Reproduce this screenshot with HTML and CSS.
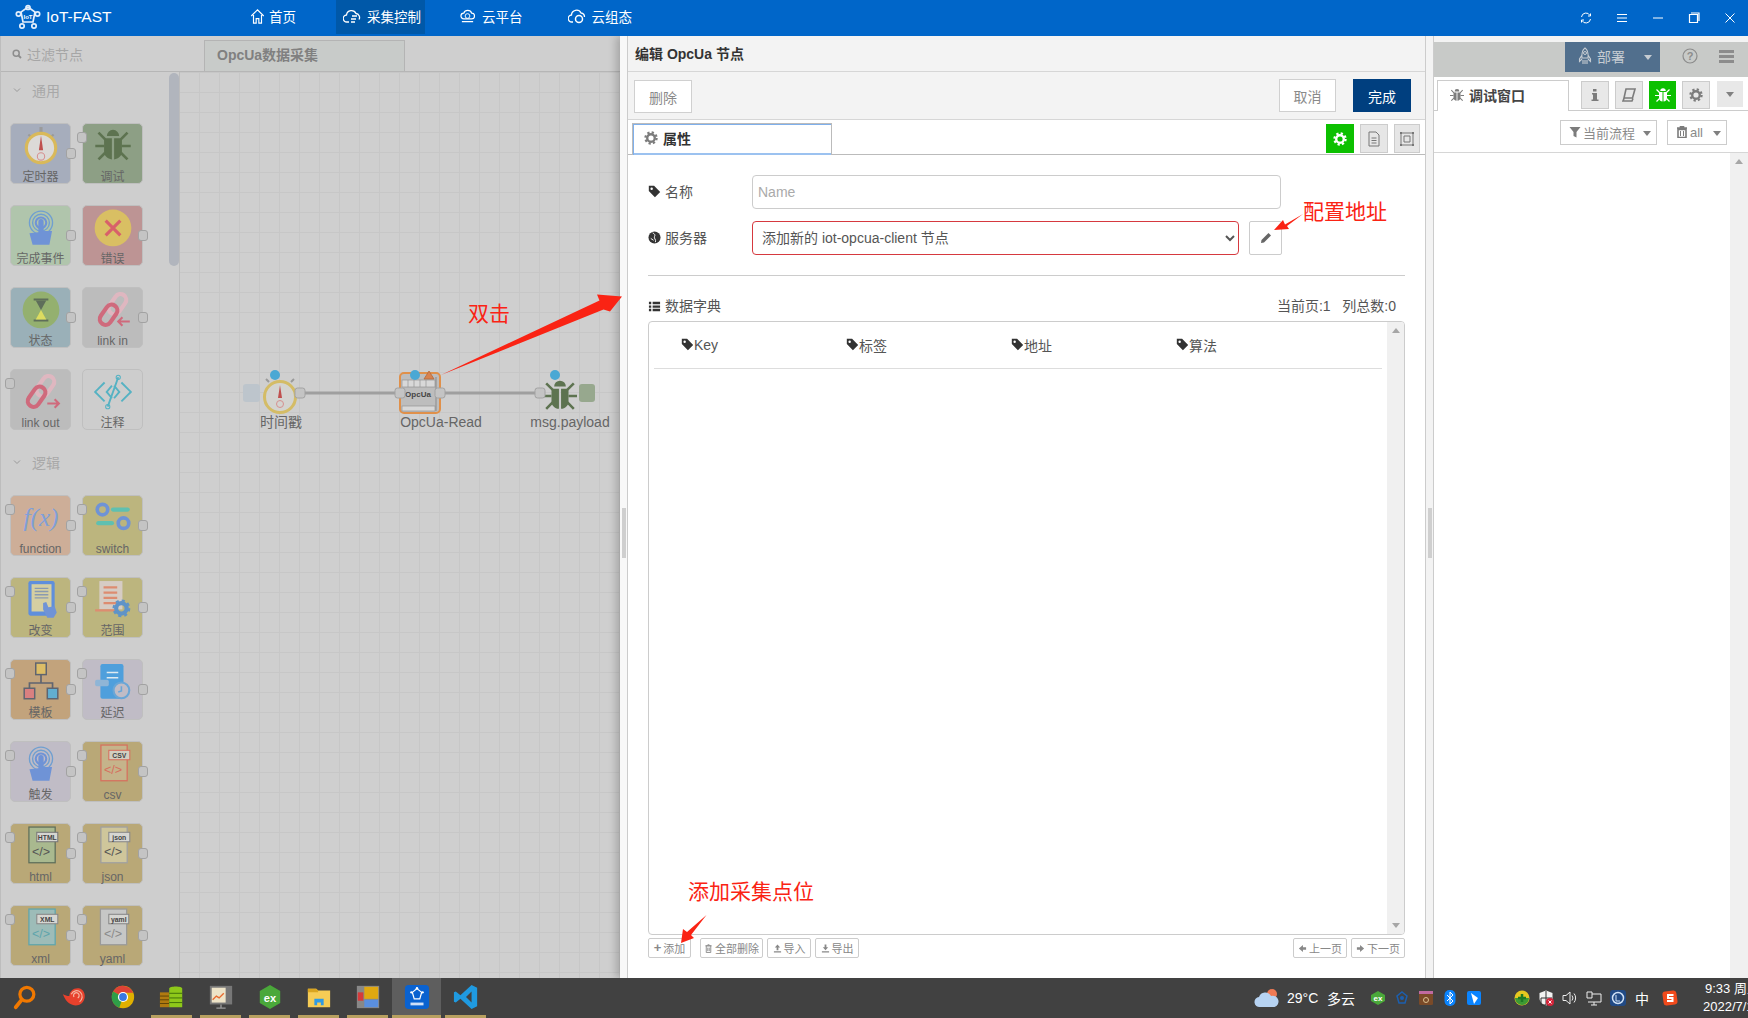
FILE: index.html
```html
<!DOCTYPE html>
<html lang="zh-CN">
<head>
<meta charset="utf-8">
<title>IoT-FAST</title>
<link rel="stylesheet" href="styles.css">
</head>
<body>
<svg class="sprite" aria-hidden="true">
  <symbol id="bug" viewBox="0 0 32 32">
    <path d="M10.5 8a5.5 5.5 0 0 1 11 0z" fill="currentColor"/>
    <path d="M8 10h7v19c-4-.5-7-3-7-7zM17 10h7v12c0 4-3 6.500-7 7z" fill="currentColor"/>
    <path d="M9 11 3 5M23 11l6-6M8 17H0M24 17h8M9 23l-6 6M23 23l6 6" stroke="currentColor" stroke-width="2.400" fill="none"/>
  </symbol>
  <symbol id="tag" viewBox="0 0 16 16">
    <path fill-rule="evenodd" fill="currentColor" d="M1 1h6.500L15 8.500 8.500 15 1 7.500zM4.500 3A1.500 1.500 0 1 0 4.500 6 1.500 1.500 0 0 0 4.500 3z"/>
  </symbol>
  <symbol id="gear" viewBox="0 0 20 20">
    <circle cx="10" cy="10" r="5.400" fill="none" stroke="currentColor" stroke-width="3.400"/>
    <circle cx="10" cy="10" r="8" fill="none" stroke="currentColor" stroke-width="3.200" stroke-dasharray="3.200 3.080"/>
  </symbol>
  <symbol id="touch" viewBox="0 0 40 40">
    <g fill="none" stroke="#6f9fd0" stroke-width="1.300"><circle cx="20" cy="14" r="11"/><circle cx="20" cy="14" r="8"/></g>
    <circle cx="20" cy="14" r="5" fill="none" stroke="#6f93d6" stroke-width="2"/>
    <path d="M17.500 13a2.500 2.500 0 0 1 5 0v9h8l-2.500 13h-16L9 24l8.500-1z" fill="#6f93d6"/>
  </symbol>
</svg>

<header class="app-header">
  <div class="brand">
    <svg class="brand-logo" viewBox="0 0 26 26"><g fill="none" stroke="#e4eefb" stroke-width="1.700"><path d="M13 3 20 8 18 18H8L6 8z"/><circle cx="13" cy="3.500" r="2"/><circle cx="3.500" cy="10" r="2.200"/><circle cx="22.500" cy="10" r="2.200"/><circle cx="7" cy="22" r="2.200"/><circle cx="19" cy="22" r="2.200"/></g><text x="13" y="14.500" class="brand-iot">IoT</text></svg>
    <span class="brand-name">IoT-FAST</span>
  </div>
  <nav class="main-nav">
    <a class="nav-item"><svg class="nav-ic-s" viewBox="0 0 16 18"><path d="M1 9 8 2l7 7M3.500 8v9h3v-5h3v5h3V8" fill="none" stroke="#fff" stroke-width="1.300"/></svg>首页</a>
    <a class="nav-item active"><svg class="nav-ic" viewBox="0 0 18 16"><path d="M6 14H4a3.500 3.500 0 0 1-.5-7A5 5 0 0 1 13 5.500a4 4 0 0 1 3 6M9 8h5M8 11h5M8 14h4" fill="none" stroke="#fff" stroke-width="1.300"/></svg>采集控制</a>
    <a class="nav-item"><svg class="nav-ic-s" viewBox="0 0 16 16"><path d="M4 11a3 3 0 0 1 0-6 4.500 4.500 0 0 1 8.500 0 3 3 0 0 1 0 6zM2 14h12" fill="none" stroke="#fff" stroke-width="1.300"/><circle cx="8" cy="8" r="2.500" fill="none" stroke="#fff"/></svg>云平台</a>
    <a class="nav-item"><svg class="nav-ic" viewBox="0 0 18 16"><path d="M5 14H4a3.500 3.500 0 0 1-.5-7A5 5 0 0 1 13 5a4 4 0 0 1 3.500 4" fill="none" stroke="#fff" stroke-width="1.300"/><circle cx="11" cy="11" r="3.500" fill="none" stroke="#fff" stroke-width="1.500"/></svg>云组态</a>
  </nav>
  <div class="win-controls">
    <span class="win-btn"><svg class="win-ic" viewBox="0 0 12 12"><path d="M1.500 5A4.500 4.500 0 0 1 10 3.500M10.500 7A4.500 4.500 0 0 1 2 8.500M8 4h2.500V1.500M4 8H1.500v2.500" fill="none" stroke="#fff"/></svg></span>
    <span class="win-btn"><svg class="win-ic" viewBox="0 0 12 12"><path d="M1 2.500h10M1 6h10M1 9.500h10" stroke="#fff"/></svg></span>
    <span class="win-btn"><svg class="win-ic" viewBox="0 0 12 12"><path d="M1 6h10" stroke="#fff"/></svg></span>
    <span class="win-btn"><svg class="win-ic" viewBox="0 0 12 12"><path d="M1.500 2.500h8v8h-8zM3 1h8v8" fill="none" stroke="#fff" stroke-width="1.200"/></svg></span>
    <span class="win-btn"><svg class="win-ic" viewBox="0 0 12 12"><path d="M1.500 1.500l9 9M10.500 1.500l-9 9" stroke="#fff"/></svg></span>
  </div>
</header>

<main class="app-main">
  <section class="editor">
    <div class="ws-top">
      <div class="filter-box">
        <svg class="filter-ic" viewBox="0 0 10 10"><circle cx="4.200" cy="4.200" r="3" fill="none" stroke="#8d8d8d" stroke-width="1.500"/><path d="M6.500 6.500 9 9" stroke="#8d8d8d" stroke-width="1.800"/></svg>
        过滤节点
      </div>
      <div class="ws-tab">OpcUa数据采集</div>
    </div>
    <div class="ws-body">
      <aside class="palette">
        <div class="palette-scroll"></div>

        <div class="cat-head"><svg class="cat-ic" viewBox="0 0 8 6"><path d="M1 1.500l3 3 3-3" fill="none" stroke="#9a9a9a"/></svg>通用</div>
        <div class="cat-nodes">
          <div class="pn c-blue"><i class="port out"></i>
            <svg class="pn-ic" viewBox="0 0 40 40"><rect x="18.500" y="1" width="3" height="5" fill="#9a9a9a"/><path d="M8 8l3 3M32 8l-3 3" stroke="#9a9a9a" stroke-width="2"/><circle cx="20" cy="21" r="14" fill="#dcdad7" stroke="#d9b95a" stroke-width="3"/><polygon points="20,9 22,23 18,23" fill="#c0504d"/><circle cx="20" cy="29" r="3.500" fill="none" stroke="#d69090"/></svg>
            <span>定时器</span></div>
          <div class="pn c-green"><i class="port in"></i>
            <svg class="pn-ic bug-ic" viewBox="0 0 40 40"><use href="#bug" x="3" y="1" width="34" height="34"/></svg>
            <span>调试</span></div>
          <div class="pn c-lgreen"><i class="port out"></i>
            <svg class="pn-ic" viewBox="0 0 40 40"><use href="#touch" width="40" height="40"/></svg>
            <span>完成事件</span></div>
          <div class="pn c-red"><i class="port out"></i>
            <svg class="pn-ic" viewBox="0 0 40 40"><circle cx="20" cy="19" r="17.500" fill="#d9bf63"/><path d="M13 12l14 14M27 12 13 26" stroke="#d8606a" stroke-width="3"/></svg>
            <span>错误</span></div>
          <div class="pn c-teal"><i class="port out"></i>
            <svg class="pn-ic" viewBox="0 0 40 40"><circle cx="20" cy="19" r="17.500" fill="#94b06f"/><path d="M13 9h14M13 29h14" stroke="#5f6e5a" stroke-width="2"/><polygon points="15,10 25,10 20,19" fill="#5f6e5a"/><polygon points="20,19 25,28 15,28" fill="#dcdc60"/></svg>
            <span>状态</span></div>
          <div class="pn c-gray"><i class="port out"></i>
            <svg class="pn-ic" viewBox="0 0 40 40"><rect x="19" y="3" width="11" height="21" rx="5.500" transform="rotate(35 24.500 13)" fill="none" stroke="#dfb7c0" stroke-width="4"/><rect x="10" y="13" width="11" height="21" rx="5.500" transform="rotate(35 15.500 24)" fill="none" stroke="#cf6a7c" stroke-width="4"/><path d="M36 30H25M29 26l-4 4 4 4" fill="none" stroke="#cf6a7c" stroke-width="2"/></svg>
            <span>link in</span></div>
          <div class="pn c-gray"><i class="port in"></i>
            <svg class="pn-ic" viewBox="0 0 40 40"><rect x="19" y="3" width="11" height="21" rx="5.500" transform="rotate(35 24.500 13)" fill="none" stroke="#dfb7c0" stroke-width="4"/><rect x="10" y="13" width="11" height="21" rx="5.500" transform="rotate(35 15.500 24)" fill="none" stroke="#cf6a7c" stroke-width="4"/><path d="M26 30h11M33 26l4 4-4 4" fill="none" stroke="#cf6a7c" stroke-width="2"/></svg>
            <span>link out</span></div>
          <div class="pn c-pale">
            <svg class="pn-ic" viewBox="0 0 40 40"><path d="M12 10 3 19l9 9M28 10l9 9-9 9M25 5 15 33M19 13l-5 6 5 6M21 13l5 6-5 6" fill="none" stroke="#55b2c3" stroke-width="1.800"/><circle cx="25" cy="5" r="2" fill="none" stroke="#55b2c3"/><circle cx="15" cy="33" r="2" fill="none" stroke="#55b2c3"/></svg>
            <span>注释</span></div>
        </div>

        <div class="cat-head"><svg class="cat-ic" viewBox="0 0 8 6"><path d="M1 1.500l3 3 3-3" fill="none" stroke="#9a9a9a"/></svg>逻辑</div>
        <div class="cat-nodes">
          <div class="pn c-peach"><i class="port in"></i><i class="port out"></i>
            <svg class="pn-ic" viewBox="0 0 40 40"><text x="20" y="27" class="fx-text">f(x)</text></svg>
            <span>function</span></div>
          <div class="pn c-olive"><i class="port in"></i><i class="port out"></i>
            <svg class="pn-ic" viewBox="0 0 40 40"><circle cx="10" cy="11" r="5" fill="none" stroke="#6f93d6" stroke-width="3.500"/><rect x="18" y="9" width="18" height="4" rx="2" fill="#5fc0b0"/><rect x="4" y="22" width="17" height="4" rx="2" fill="#5fc0b0"/><circle cx="30" cy="24" r="5" fill="none" stroke="#6f93d6" stroke-width="3.500"/></svg>
            <span>switch</span></div>
          <div class="pn c-olive"><i class="port in"></i><i class="port out"></i>
            <svg class="pn-ic" viewBox="0 0 40 40"><rect x="8" y="1" width="25" height="33" rx="2" fill="#5f8fdc"/><rect x="11" y="4" width="19" height="26" fill="#d5cfa2"/><path d="M14 8h13M14 11h13M14 14h13M14 17h13" stroke="#8a9ab0" stroke-width="1.300"/><path d="M22 22l3-1 2 5 6-1 2 6-3 5h-6l-4-8z" fill="#6f93d6"/></svg>
            <span>改变</span></div>
          <div class="pn c-olive"><i class="port in"></i><i class="port out"></i>
            <svg class="pn-ic" viewBox="0 0 40 40"><rect x="7" y="1" width="22" height="27" fill="#d6ccc4"/><path d="M11 7h13M11 12h13M11 17h13M11 22h13M3 29h20" stroke="#dd8c70" stroke-width="2.200"/><circle cx="28" cy="27" r="5" fill="none" stroke="#5f93c8" stroke-width="4"/><circle cx="28" cy="27" r="7.500" fill="none" stroke="#5f93c8" stroke-width="2" stroke-dasharray="3 2.900"/></svg>
            <span>范围</span></div>
          <div class="pn c-orange"><i class="port in"></i><i class="port out"></i>
            <svg class="pn-ic" viewBox="0 0 40 40"><path d="M20 12v8M9 25v-5h22v5" fill="none" stroke="#5f6470" stroke-width="1.600"/><rect x="15" y="1" width="10" height="11" fill="#ddbd66" stroke="#5f6470" stroke-width="1.400"/><rect x="4" y="25" width="10" height="10" fill="#d98080" stroke="#5f6470" stroke-width="1.400"/><rect x="26" y="25" width="10" height="10" fill="#62aed0" stroke="#5f6470" stroke-width="1.400"/></svg>
            <span>模板</span></div>
          <div class="pn c-lilac"><i class="port in"></i><i class="port out"></i>
            <svg class="pn-ic" viewBox="0 0 40 40"><rect x="8" y="2" width="22" height="33" rx="2" fill="#4f9fdc"/><path d="M14 10h11M14 15h11" stroke="#dfeaf0" stroke-width="1.500"/><rect x="3" y="17" width="13" height="6" rx="1.500" fill="#8fb5d6"/><circle cx="28" cy="27" r="7.500" fill="#c0bcc6" stroke="#6aa6d6" stroke-width="2"/><path d="M28 23v4.500l-3 1" fill="none" stroke="#6aa6d6" stroke-width="1.500"/></svg>
            <span>延迟</span></div>
          <div class="pn c-lilac"><i class="port in"></i><i class="port out"></i>
            <svg class="pn-ic" viewBox="0 0 40 40"><use href="#touch" width="40" height="40"/></svg>
            <span>触发</span></div>
          <div class="pn c-tan"><i class="port in"></i><i class="port out"></i>
            <svg class="pn-ic" viewBox="0 0 40 40"><rect x="8.500" y="1" width="25" height="34" fill="#c5b48b" stroke="#d6705e" stroke-width="1.200"/><rect x="16" y="6" width="20" height="9" fill="#d2cec0" stroke="#d6705e"/><text x="26" y="13" class="doc-label">CSV</text><text x="20" y="29" class="doc-code code-red">&lt;/&gt;</text></svg>
            <span class="lat">csv</span></div>
          <div class="pn c-tan"><i class="port in"></i><i class="port out"></i>
            <svg class="pn-ic" viewBox="0 0 40 40"><rect x="8.500" y="1" width="25" height="34" fill="#a9b98f" stroke="#5f6e5a" stroke-width="1.200"/><rect x="16" y="6" width="20" height="9" fill="#d6d6d2" stroke="#777"/><text x="26" y="13" class="doc-label">HTML</text><text x="20" y="29" class="doc-code code-dark">&lt;/&gt;</text></svg>
            <span class="lat">html</span></div>
          <div class="pn c-tan"><i class="port in"></i><i class="port out"></i>
            <svg class="pn-ic" viewBox="0 0 40 40"><rect x="8.500" y="1" width="25" height="34" fill="#cfc69b" stroke="#a0a0a0" stroke-width="1.200"/><rect x="16" y="6" width="20" height="9" fill="#d6d6d2" stroke="#888"/><text x="26" y="13" class="doc-label">json</text><text x="20" y="29" class="doc-code code-dark">&lt;/&gt;</text></svg>
            <span class="lat">json</span></div>
          <div class="pn c-tan"><i class="port in"></i><i class="port out"></i>
            <svg class="pn-ic" viewBox="0 0 40 40"><rect x="8.500" y="1" width="25" height="34" fill="#9dbcb8" stroke="#5fa5ac" stroke-width="1.200"/><rect x="16" y="6" width="20" height="9" fill="#d6d6d2" stroke="#888"/><text x="26" y="13" class="doc-label">XML</text><text x="20" y="29" class="doc-code code-teal">&lt;/&gt;</text></svg>
            <span class="lat">xml</span></div>
          <div class="pn c-tan"><i class="port in"></i><i class="port out"></i>
            <svg class="pn-ic" viewBox="0 0 40 40"><rect x="8" y="1" width="25" height="34" fill="#c6c7c6" stroke="#9a9a9a" stroke-width="1.200"/><rect x="16" y="6" width="19" height="9" fill="#d6d6d2" stroke="#888"/><text x="25.500" y="13" class="doc-label">yaml</text><text x="20" y="29" class="doc-code code-gray">&lt;/&gt;</text></svg>
            <span class="lat">yaml</span></div>
        </div>
      </aside>

      <div class="canvas">
        <svg class="flow" viewBox="180 71 1253 907">
          <path d="M305 392h90M445 392h90" stroke="#9f9f9f" stroke-width="3"/>
          <rect x="243" y="383" width="17" height="18" rx="3" fill="#bdc5cc"/>
          <path d="M266 378l3 3M294 378l-3 3" stroke="#9a9a9a" stroke-width="2"/>
          <circle cx="280" cy="396" r="15.500" fill="#d4d4d0" stroke="#d4bc66" stroke-width="3"/>
          <polygon points="280,384 282,397 278,397" fill="#c0504d"/>
          <circle cx="280" cy="403" r="3.500" fill="none" stroke="#d69090"/>
          <circle cx="275" cy="374" r="5" fill="#4aa8d4"/>
          <rect x="295" y="387" width="10" height="10" rx="2.500" class="fport"/>

          <rect x="400" y="372" width="40" height="40" rx="4" fill="#bdbdbd" stroke="#e0904a" stroke-width="2"/>
          <path d="M436 376v34" stroke="#a4a4a4" stroke-width="2"/>
          <rect x="402" y="379" width="33" height="7" fill="#d8d8d8" stroke="#8a8a8a" stroke-width=".6"/>
          <path d="M408 379v7M414 379v7M420 379v7M426 379v7" stroke="#8a8a8a" stroke-width=".6"/>
          <rect x="402" y="405" width="33" height="5" fill="#d8d8d8" stroke="#8a8a8a" stroke-width=".6"/>
          <text x="418" y="396" class="op-chip">OpcUa</text>
          <polygon points="429,370 434,378 424,378" fill="#d8824e" stroke="#b06a3e" stroke-width=".8"/>
          <circle cx="415" cy="374" r="5" fill="#4aa8d4"/>
          <rect x="395" y="387" width="10" height="10" rx="2.500" class="fport"/>
          <rect x="435" y="387" width="10" height="10" rx="2.500" class="fport"/>

          <use href="#bug" x="543" y="377" width="34" height="34" class="fbug"/>
          <rect x="579" y="383" width="16" height="18" rx="3" fill="#97a88e"/>
          <rect x="535" y="387" width="10" height="10" rx="2.500" class="fport"/>
          <circle cx="555" cy="374" r="5" fill="#4aa8d4"/>

          <text x="281" y="426" class="flabel">时间戳</text>
          <text x="441" y="426" class="flabel">OpcUa-Read</text>
          <text x="570" y="426" class="flabel">msg.payload</text>
        </svg>
      </div>
    </div>

    <div class="tray">
      <div class="tray-left"><i class="grip"></i></div>
      <div class="tray-main">
        <div class="tray-title">编辑 OpcUa 节点</div>
        <div class="tray-toolbar">
          <button class="btn btn-del">删除</button>
          <span class="spacer"></span>
          <button class="btn btn-cancel">取消</button>
          <button class="btn btn-done">完成</button>
        </div>
        <div class="tray-tabs">
          <div class="prop-tab"><svg class="ic14 c-grayic" viewBox="0 0 20 20"><use href="#gear"/></svg>属性</div>
          <span class="spacer"></span>
          <span class="tab-btn on"><svg class="ic14 c-white" viewBox="0 0 20 20"><use href="#gear"/></svg></span>
          <span class="tab-btn"><svg class="ic16" viewBox="0 0 16 16"><path d="M3 1h7l3 3v11H3zM5.500 7h5M5.500 9.500h5M5.500 12h5" fill="none" stroke="#777"/></svg></span>
          <span class="tab-btn last"><svg class="ic16" viewBox="0 0 16 16"><path d="M2 2h12v12H2zM5 5h6v6H5z" fill="none" stroke="#777"/><path d="M1 1h2v2H1zM13 1h2v2h-2zM1 13h2v2H1zM13 13h2v2h-2z" fill="#777"/></svg></span>
        </div>
        <div class="tray-body">
          <div class="f-row">
            <label class="f-label"><svg class="ic13 c-dark" viewBox="0 0 16 16"><use href="#tag"/></svg>名称</label>
            <input class="f-input" type="text" placeholder="Name">
          </div>
          <div class="f-row">
            <label class="f-label"><svg class="ic13 c-dark" viewBox="0 0 14 14"><circle cx="7" cy="7" r="6.500" fill="currentColor"/><path d="M5 2c2 1 3 2 2 4S9 9 8 12M3 8l3 2" fill="none" stroke="#fff"/></svg>服务器</label>
            <select class="f-select"><option>添加新的 iot-opcua-client 节点</option></select>
            <span class="pencil"><svg class="ic12" viewBox="0 0 12 12"><path d="M8.500 1 11 3.500 4 10.500 1 11l.5-3z" fill="#666"/></svg></span>
          </div>
          <hr class="f-hr">
          <div class="dict-head">
            <span class="dict-title"><svg class="ic13 c-dark" viewBox="0 0 14 14"><path d="M1 2h2.500v2.500H1zM1 5.800h2.500v2.500H1zM1 9.500h2.500V12H1zM5 2h8v2.500H5zM5 5.800h8v2.500H5zM5 9.500h8V12H5z" fill="currentColor"/></svg>数据字典</span>
            <span class="dict-info">当前页:1&nbsp;&nbsp;&nbsp;列总数:0</span>
          </div>
          <div class="dict-table">
            <div class="dict-inner">
              <div class="dict-cols">
                <span class="dict-col"><svg class="ic13 c-dark" viewBox="0 0 16 16"><use href="#tag"/></svg>Key</span>
                <span class="dict-col"><svg class="ic13 c-dark" viewBox="0 0 16 16"><use href="#tag"/></svg>标签</span>
                <span class="dict-col"><svg class="ic13 c-dark" viewBox="0 0 16 16"><use href="#tag"/></svg>地址</span>
                <span class="dict-col"><svg class="ic13 c-dark" viewBox="0 0 16 16"><use href="#tag"/></svg>算法</span>
              </div>
            </div>
            <div class="dict-scroll"><i class="arr-up"></i><i class="arr-down"></i></div>
          </div>
          <div class="dict-actions">
            <button class="mini w43"><b class="mi">+</b>添加</button>
            <button class="mini w63 ml9"><svg class="ic9" viewBox="0 0 10 10"><path d="M2.500 2h5v7.500h-5zM1.500 2h7M4 .8h2M4.200 4v4M5.800 4v4" fill="none" stroke="#888"/></svg>全部删除</button>
            <button class="mini w44"><svg class="ic9" viewBox="0 0 10 10"><path d="M5 .5 8 4H6v3H4V4H2zM1 8h8v1.500H1z" fill="#888"/></svg>导入</button>
            <button class="mini w44"><svg class="ic9" viewBox="0 0 10 10"><path d="M5 7 2 3.500h2V.5h2v3h2zM1 8h8v1.500H1z" fill="#888"/></svg>导出</button>
            <span class="spacer"></span>
            <button class="mini w54"><svg class="ic9" viewBox="0 0 10 10"><path d="M5.500 1v2.500H9v3H5.500V9L1 5z" fill="#888"/></svg>上一页</button>
            <button class="mini w54"><svg class="ic9" viewBox="0 0 10 10"><path d="M4.500 1v2.500H1v3h3.500V9L9 5z" fill="#888"/></svg>下一页</button>
          </div>
        </div>
      </div>
      <div class="tray-right"><i class="grip"></i></div>
    </div>
  </section>

  <aside class="sidebar">
    <div class="side-strip"></div>
    <div class="side-band">
      <span class="deploy"><svg class="rocket" viewBox="0 0 16 18"><path d="M8 1c3 2 3.500 5 3 10H5C4.500 6 5 3 8 1zM5 8 2.500 12v2.500L5 12M11 8l2.500 4v2.500L11 12M6 13v4M8 13v4M10 13v4" fill="none" stroke="#c6ccd2" stroke-width="1.100"/><circle cx="8" cy="6" r="1.500" fill="none" stroke="#c6ccd2"/></svg>部署<i class="caret c-light"></i></span>
      <span class="help"><svg class="ic16" viewBox="0 0 16 16"><circle cx="8" cy="8" r="7" fill="none" stroke="#8c8c8c" stroke-width="1.200"/><text x="8" y="12" class="help-q">?</text></svg></span>
      <span class="burger"><i></i><i></i><i></i></span>
    </div>
    <div class="side-tabs">
      <div class="side-tab"><svg class="ic14 c-grayic" viewBox="0 0 32 32"><use href="#bug"/></svg>调试窗口</div>
      <span class="spacer"></span>
      <span class="s-btn"><svg class="ic14 c-grayic" viewBox="0 0 14 14"><path d="M5 1h3.500v2.500H5zM4 5h5v6.500h1.500V13h-7v-1.500H5V6.500H4z" fill="currentColor"/></svg></span>
      <span class="s-btn"><svg class="ic14 c-grayic" viewBox="0 0 14 14"><path d="M4 1h9l-2.500 9H2zM2 10.500 1 13h9l1-2.500" fill="none" stroke="currentColor" stroke-width="1.600"/></svg></span>
      <span class="s-btn on"><svg class="ic16 c-white" viewBox="0 0 32 32"><use href="#bug"/></svg></span>
      <span class="s-btn"><svg class="ic14 c-grayic" viewBox="0 0 20 20"><use href="#gear"/></svg></span>
      <span class="s-drop"><i class="caret c-gray2"></i></span>
    </div>
    <div class="side-filter">
      <span class="sf-btn sf1"><svg class="ic12 c-grayic" viewBox="0 0 12 12"><path d="M.5 1h11L7.500 6v5.500L4.500 10V6z" fill="currentColor"/></svg>当前流程<i class="caret c-gray2"></i></span>
      <span class="sf-btn sf2"><svg class="ic12 c-grayic" viewBox="0 0 12 12"><path d="M2 3.500h8V11.500H2zM1 2h10M4.500 2V.8h3V2" fill="none" stroke="currentColor" stroke-width="1.600"/><path d="M4.500 5v5M7.500 5v5" stroke="currentColor"/></svg>all<i class="caret c-gray2"></i></span>
    </div>
    <div class="side-body"><div class="side-scroll"><i class="arr-up"></i></div></div>
  </aside>
</main>

<footer class="taskbar">
  <div class="tb-app"><svg class="tb-ic" viewBox="0 0 28 28"><circle cx="16" cy="11" r="7.500" fill="none" stroke="#f07800" stroke-width="3.500"/><path d="M10.500 17 4 25" stroke="#f07800" stroke-width="4" stroke-linecap="round"/></svg></div>
  <div class="tb-app"><svg class="tb-ic" viewBox="0 0 28 28"><path d="M2 11c3 1 4 2 7 2 0-6 6-10 12-8 6 3 6 12 1 16-5 4-15 3-20-10z" fill="#e8412c"/><path d="M14 14a3 3 0 1 1 4 1M11 11c2-4 7-5 10-2s2 8-1 10" fill="none" stroke="#f5b59f" stroke-width="1.300"/></svg></div>
  <div class="tb-app"><svg class="tb-ic" viewBox="0 0 28 28"><circle cx="14" cy="14" r="12" fill="#e0b000"/><path d="M14 14 3.500 8A12 12 0 0 1 25 9.500H14z" fill="#dd4236"/><path d="M14 14 3.500 8A12 12 0 0 0 10 25.500z" fill="#2e9e48"/><circle cx="14" cy="14" r="5.500" fill="#fff"/><circle cx="14" cy="14" r="4.200" fill="#3a78e0"/></svg></div>
  <div class="tb-app ul"><svg class="tb-ic" viewBox="0 0 28 28"><path d="M1 9h10v16H1z" fill="#b07a10"/><path d="M1 13h10M1 17h10M1 21h10" stroke="#5b4208"/><path d="M11 5c0-3 14-3 14 0v20H11z" fill="#8ec81a"/><path d="M11 10h14M11 15h14M11 20h14" stroke="#3c6c08"/></svg></div>
  <div class="tb-app ul"><svg class="tb-ic" viewBox="0 0 28 28"><rect x="2" y="2" width="24" height="20" fill="#777"/><rect x="4" y="4" width="15" height="16" fill="#eee4c8"/><path d="M5 17l4-4 3 2 5-5" fill="none" stroke="#e86a30" stroke-width="1.500"/><path d="M9 26h10M14 22v4" stroke="#999" stroke-width="1.500"/></svg></div>
  <div class="tb-app ul"><svg class="tb-ic" viewBox="0 0 28 28"><polygon points="14,1 25,7.500 25,20.500 14,27 3,20.500 3,7.500" fill="#4aa83a"/><text x="14" y="19" class="ex-text">ex</text></svg></div>
  <div class="tb-app ul"><svg class="tb-ic" viewBox="0 0 28 28"><path d="M2 5h9l2 2h13v18H2z" fill="#f6cc55"/><path d="M2 5h9l2 2v2H2z" fill="#d9a520"/><path d="M9 23v-7h10v7h-3v-3h-4v3z" fill="#2f9ae4"/></svg></div>
  <div class="tb-app ul"><svg class="tb-ic" viewBox="0 0 28 28"><rect x="2" y="2" width="24" height="24" fill="#888"/><rect x="10" y="3" width="15" height="13" fill="#e0a810"/><rect x="10" y="17" width="15" height="8" fill="#5a8fe0"/><rect x="3" y="9" width="6" height="9" fill="#d63a3a"/></svg></div>
  <div class="tb-app ul active"><svg class="tb-ic" viewBox="0 0 28 28"><rect x="1" y="1" width="26" height="26" rx="4" fill="#0a62d0"/><path d="M14 5l5 4-2 7h-6l-2-7z" fill="none" stroke="#fff" stroke-width="1.300"/><circle cx="14" cy="4.500" r="1.300" fill="#fff"/><circle cx="8" cy="9" r="1.300" fill="#fff"/><circle cx="20" cy="9" r="1.300" fill="#fff"/><rect x="7" y="20" width="14" height="3" fill="#cfe0f8"/></svg></div>
  <div class="tb-app ul"><svg class="tb-ic" viewBox="0 0 28 28"><path d="M20 1 26 4v20l-6 3L8 16l-5 4-2-1V9l2-1 5 4zM20 8l-6 6 6 6z" fill="#1f9ae0" fill-rule="evenodd"/></svg></div>

  <div class="tray-area">
    <svg class="tr-cloud" viewBox="0 0 26 20"><circle cx="18" cy="6" r="5" fill="#ef7a55"/><path d="M6 19a5 5 0 0 1-1-10 6.500 6.500 0 0 1 12-1 5.500 5.500 0 0 1 3.500 11z" fill="#b7d3f2"/></svg>
    <span class="tr-temp">29°C</span>
    <span class="tr-weather">多云</span>
    <span class="tr-cell first"><svg class="tr-ic" viewBox="0 0 16 16"><polygon points="8,1 15,5 15,11 8,15 1,11 1,5" fill="#4aa83a"/><text x="8" y="11" class="ex-small">ex</text></svg></span>
    <span class="tr-cell"><svg class="tr-ic" viewBox="0 0 16 16"><path d="M8 2l5 4-2 7H5L3 6z" fill="none" stroke="#1c5fae" stroke-width="1.500"/><circle cx="8" cy="8" r="2" fill="#1c5fae"/></svg></span>
    <span class="tr-cell"><svg class="tr-ic" viewBox="0 0 16 16"><rect x="1" y="1" width="14" height="14" rx="1.500" fill="#7a4a28"/><rect x="1" y="1" width="14" height="3" fill="#c06aa0"/><circle cx="8" cy="10" r="2.500" fill="none" stroke="#d9c090"/></svg></span>
    <span class="tr-cell"><svg class="tr-ic" viewBox="0 0 16 16"><rect x="2.500" y="0" width="11" height="16" rx="5" fill="#0a84ff"/><path d="M5 5l6 6-3 3V2l3 3-6 6" fill="none" stroke="#fff"/></svg></span>
    <span class="tr-cell"><svg class="tr-ic" viewBox="0 0 16 16"><rect x="1" y="1" width="14" height="14" rx="2" fill="#0a84ff"/><path d="M5 3l7 5-4 6z" fill="#fff"/></svg></span>
    <span class="tr-cell gap"><svg class="tr-ic" viewBox="0 0 16 16"><circle cx="8" cy="8" r="7.500" fill="#e6c820"/><path d="M1 8a7 7 0 0 0 14 0" fill="#3d9a34"/><path d="M8 4v8M4 8h8" stroke="#1d7a24" stroke-width="2.500"/></svg></span>
    <span class="tr-cell"><svg class="tr-ic" viewBox="0 0 16 16"><path d="M8 .5 14.500 3v5c0 4-3 6.500-6.500 7.500C4.500 14.500 1.500 12 1.500 8V3z" fill="#f2f2f2"/><path d="M8 1v14H3V8h11" fill="none" stroke="#333"/><circle cx="12" cy="12" r="4" fill="#d6243a"/><path d="M10.500 10.500l3 3M13.500 10.500l-3 3" stroke="#fff"/></svg></span>
    <span class="tr-cell"><svg class="tr-ic" viewBox="0 0 16 16"><path d="M1 5.500h3L8 2v12L4 10.500H1z" fill="none" stroke="#eee"/><path d="M10 5.500a4 4 0 0 1 0 5M12 3.500a7 7 0 0 1 0 9" fill="none" stroke="#eee"/></svg></span>
    <span class="tr-cell"><svg class="tr-ic" viewBox="0 0 16 16"><path d="M1 2h5v6H1zM6 4h9v8H2M8 12v3M5 15h6" fill="none" stroke="#eee"/></svg></span>
    <span class="tr-cell"><svg class="tr-ic" viewBox="0 0 16 16"><rect width="16" height="16" rx="3" fill="#214a85"/><circle cx="8" cy="8" r="5.500" fill="none" stroke="#cfe0f5" stroke-width="1.500"/><path d="M6 5v6h4" fill="none" stroke="#cfe0f5"/></svg></span>
    <span class="tr-cell tr-ime">中</span>
    <span class="tr-cell sogou"><svg class="tr-ic" viewBox="0 0 16 16"><rect x="1" y="1" width="14" height="14" rx="3" transform="rotate(-8 8 8)" fill="#f04a1c"/><path d="M11.500 5H6v3h4.500v3H5" fill="none" stroke="#fff" stroke-width="2"/></svg></span>
    <div class="clock"><span>9:33 周五</span><span>2022/7/1</span></div>
  </div>
</footer>

<svg class="notes" viewBox="0 0 1748 1018" aria-hidden="true">
  <polygon points="441,375 599.500,300.500 597,294.500 622,296.500 610,311.500 603.500,309.500" fill="#fa2314"/>
  <polygon points="1303,214 1285,224.500 1283,220 1274,230 1289,229 1287,226" fill="#fa2314"/>
  <polygon points="706.500,915 687,932 683,929 681,943 694,938 691,935" fill="#fa2314"/>
</svg>
<span class="note n1">双击</span>
<span class="note n2">配置地址</span>
<span class="note n3">添加采集点位</span>
</body>
</html>
```

FILE: styles.css
```css
* { box-sizing: border-box; }
html, body { margin: 0; height: 100%; overflow: hidden; }
body {
  width: 1748px; height: 1018px; position: relative;
  display: flex; flex-direction: column;
  font: 14px "Liberation Sans", "Noto Sans CJK SC", sans-serif;
  color: #333; background: #fff;
}
i { display: block; font-style: normal; }
.sprite { position: absolute; width: 0; height: 0; }
.spacer { flex: 1; }
.ic9 { width: 9px; height: 9px; flex: none; }
.ic12 { width: 12px; height: 12px; flex: none; }
.ic13 { width: 13px; height: 13px; flex: none; }
.ic14 { width: 14px; height: 14px; flex: none; }
.ic16 { width: 16px; height: 16px; flex: none; }
.c-grayic { color: #7c7c7c; }
.c-white { color: #fff; }
.c-dark { color: #333; }

/* header */
.app-header { height: 36px; flex: none; background: #0066c9; color: #fff; display: flex; align-items: flex-start; }
.brand { display: flex; align-items: center; height: 34px; padding-left: 15px; width: 243px; gap: 5px; }
.brand-logo { width: 26px; height: 26px; }
.brand-iot { font-size: 6px; font-weight: 700; text-anchor: middle; fill: #fff; }
.brand-name { font-size: 15.500px; }
.main-nav { display: flex; font-size: 13.500px; }
.nav-item { display: flex; align-items: center; gap: 4px; height: 34px; padding: 0 7px 2px; margin-left: 30px; color: #fff; }
.nav-item:first-child { margin-left: 0; padding-right: 6px; }
.nav-item:nth-child(2) { margin-left: 34px; gap: 6px; padding-right: 4px; }
.nav-item:nth-child(3) { margin-left: 28px; gap: 7px; }
.nav-item:nth-child(4) { margin-left: 31px; gap: 6px; }
.nav-item.active { background: #0058a8; }
.nav-ic { width: 18px; height: 16px; }
.nav-ic-s { width: 15px; height: 16px; }
.win-controls { margin-left: auto; display: flex; }
.win-btn { width: 36px; height: 36px; display: flex; align-items: center; justify-content: center; }
.win-ic { width: 12px; height: 12px; }

/* main */
.app-main { flex: 1; display: flex; min-height: 0; }
.editor { flex: 1; position: relative; overflow: hidden; display: flex; flex-direction: column; background: #cfcfcf; border-left: 1px solid #bdbdbd; }
.ws-top { height: 36px; flex: none; display: flex; border-bottom: 1px solid #b6b6b6; }
.filter-box { width: 203px; display: flex; align-items: center; padding-left: 11px; gap: 5px; color: #a6a6a6; }
.filter-ic { width: 10px; height: 10px; }
.ws-tab { width: 201px; margin-top: 4px; background: #c8cbc9; border: 1px solid #b4b4b4; border-bottom: 0; padding: 3px 0 0 12px; color: #808080; font-weight: 700; }
.ws-body { flex: 1; display: flex; min-height: 0; }

/* palette */
.palette { width: 179px; flex: none; position: relative; overflow: hidden; border-right: 1px solid #bcbcbc; background: #cecece; }
.palette-scroll { position: absolute; left: 168px; top: 1px; width: 10px; height: 193px; border-radius: 5px; background: #b1b5bd; }
.cat-head { height: 38px; display: flex; align-items: center; padding: 0 0 3px 12px; gap: 11px; color: #a8a8a8; }
.cat-ic { width: 8px; height: 6px; }
.cat-nodes { display: grid; grid-template-columns: 61px 61px; gap: 21px 11px; padding: 13px 0 14px 9px; }
.pn { position: relative; height: 61px; border: 1px solid #bfbfbf; border-radius: 5px; display: flex; flex-direction: column; align-items: center; color: #666; font-size: 12px; }
.pn span { position: absolute; left: -6px; right: -6px; bottom: -3px; text-align: center; line-height: 17px; white-space: nowrap; }
.pn-ic { width: 42px; height: 42px; margin-top: 2px; flex: none; }
.bug-ic { color: #5d7350; }
.port { position: absolute; width: 10px; height: 11px; border: 1px solid #a2a2a2; border-radius: 3px; background: #c4c4c4; z-index: 1; }
.port.out { right: -6px; top: 24px; }
.port.in { left: -6px; top: 8px; }
.c-blue { background: #a6adbc; }
.c-green { background: #8d9f85; }
.c-lgreen { background: #b0c5ac; }
.c-red { background: #bd9494; }
.c-teal { background: #9ab0b8; }
.c-gray { background: #bcbcbc; }
.c-pale { background: #cdcdcd; }
.c-peach { background: #cdae98; }
.c-olive { background: #bcb57e; }
.c-orange { background: #c2a37c; }
.c-lilac { background: #c0bcc6; }
.c-tan { background: #b9a877; }
.fx-text { font: italic 24px "Liberation Serif", serif; fill: #7f9fd8; text-anchor: middle; }
.doc-label { font: 700 6.500px "Liberation Sans", sans-serif; fill: #444; text-anchor: middle; }
.doc-code { font: 12px "Liberation Sans", sans-serif; text-anchor: middle; }
.code-red { fill: #d6705e; }
.code-dark { fill: #555; }
.code-teal { fill: #5fa5ac; }
.code-gray { fill: #8a8a8a; }

/* canvas */
.canvas {
  flex: 1; position: relative; min-width: 0; overflow: hidden;
  background-color: #cfcfcf;
  background-image: linear-gradient(#c7c7c7 1px, transparent 1px), linear-gradient(90deg, #c7c7c7 1px, transparent 1px);
  background-size: 20px 20px;
  background-position: -1px 0;
}
.flow { position: absolute; left: 0; top: 0; width: 1253px; height: 907px; }
.fport { fill: #c4c4c4; stroke: #a2a2a2; }
.fbug { color: #5d7350; }
.flabel { font-size: 14px; fill: #666; text-anchor: middle; }
.op-chip { font: 700 8px "Liberation Sans", sans-serif; fill: #444; text-anchor: middle; }

/* edit tray */
.tray { position: absolute; top: 0; right: 0; bottom: 0; width: 813px; display: flex; background: #fff; box-shadow: -4px 0 8px rgba(0, 0, 0, .2); }
.tray-left { width: 8px; flex: none; background: #f8f8f8; border-right: 1px solid #ccc; position: relative; }
.tray-right { width: 8px; flex: none; background: #f3f3f3; border-left: 1px solid #ccc; position: relative; }
.grip { position: absolute; left: 2px; top: 472px; width: 4px; height: 50px; background: #cfcfcf; }
.tray-main { flex: 1; min-width: 0; display: flex; flex-direction: column; }
.tray-title { height: 36px; flex: none; background: #f3f3f3; border-bottom: 1px solid #d6d6d6; padding: 9px 0 0 7px; font-weight: 700; line-height: 18px; }
.tray-toolbar { height: 48px; flex: none; background: #f3f3f3; border-bottom: 1px solid #d6d6d6; display: flex; align-items: flex-start; padding: 7px 14px 0 6px; gap: 17px; }
.btn { height: 33px; width: 58px; font: inherit; background: #fff; border: 1px solid #d0d0d0; color: #8a8a8a; padding: 0; }
.btn-del { margin-top: 1px; }
.btn-cancel { width: 57px; }
.btn-done { background: #003f7f; border-color: #003f7f; color: #fff; }
.tray-tabs { height: 35px; flex: none; background: #fff; border-bottom: 1px solid #bbb; display: flex; align-items: flex-start; padding: 3px 5px 0 4px; gap: 6px; }
.prop-tab { width: 200px; height: 32px; background: #fff; border: 1px solid #bbb; border-bottom: 0; box-shadow: inset 1px 1px 0 #7fb0ec, inset 0 -2px 0 #9cc2f0; display: flex; align-items: center; padding: 0 0 3px 11px; gap: 5px; font-weight: 700; }
.tab-btn { width: 28px; height: 29px; margin-top: 1px; background: #e6e6e6; border: 1px solid #ccc; display: flex; align-items: center; justify-content: center; }
.tab-btn.on { background: #0cc000; border-color: #0cc000; }
.tab-btn.last { width: 26px; }
.tray-body { flex: 1; min-height: 0; background: #fff; display: flex; flex-direction: column; padding: 20px 20px 20px; }
.f-row { display: flex; align-items: center; height: 34px; margin-bottom: 12px; }
.f-label { width: 105px; flex: none; display: flex; align-items: center; gap: 4px; color: #555; padding-bottom: 2px; }
.f-input { width: 529px; height: 34px; margin-left: -1px; border: 1px solid #ccc; border-radius: 4px; padding: 0 5px; font: 14px "Liberation Sans", sans-serif; color: #555; }
.f-input::placeholder { color: #aaa; }
.f-select { width: 487px; height: 34px; margin-left: -1px; border: 1px solid #d6393f; border-radius: 4px; padding: 0 5px; background: #fff; font: 14px "Liberation Sans", "Noto Sans CJK SC", sans-serif; color: #555; }
.pencil { width: 33px; height: 34px; margin-left: 10px; border: 1px solid #ccc; border-radius: 2px; display: flex; align-items: center; justify-content: center; }
.f-hr { margin: 8px 0 0; border: 0; border-top: 1px solid #ccc; height: 1px; width: 757px; }
.dict-head { height: 45px; flex: none; display: flex; align-items: flex-end; justify-content: space-between; padding: 0 9px 5px 0; color: #555; line-height: 20px; }
.dict-title { display: flex; align-items: center; gap: 4px; }
.dict-table { flex: 1; min-height: 0; border: 1px solid #ccc; border-radius: 4px; display: flex; width: 757px; overflow: hidden; }
.dict-inner { flex: 1; padding: 0 5px; min-width: 0; }
.dict-cols { height: 47px; border-bottom: 1px solid #ddd; display: grid; grid-template-columns: repeat(4, 165px); align-items: center; padding-left: 27px; color: #555; }
.dict-col { display: flex; align-items: center; gap: 0; padding-bottom: 1px; }
.dict-scroll { width: 17px; flex: none; background: #f0f0f0; position: relative; }
.arr-up, .arr-down { position: absolute; left: 5px; width: 0; height: 0; border-left: 4px solid transparent; border-right: 4px solid transparent; }
.arr-up { top: 6px; border-bottom: 5px solid #a6a6a6; }
.arr-down { bottom: 6px; border-top: 5px solid #a6a6a6; }
.dict-actions { height: 20px; flex: none; margin-top: 3px; display: flex; gap: 4px; width: 757px; }
.mini { height: 20px; padding: 0; font: 11px "Liberation Sans", "Noto Sans CJK SC", sans-serif; color: #888; background: #fff; border: 1px solid #ccc; border-radius: 2px; display: flex; align-items: center; justify-content: center; gap: 2px; }
.mi { font-size: 13px; line-height: 12px; }
.w43 { width: 43px; }
.w63 { width: 63px; }
.w44 { width: 44px; }
.w54 { width: 54px; }
.ml9 { margin-left: 5px; }

/* sidebar */
.sidebar { width: 315px; flex: none; display: flex; flex-direction: column; background: #fff; border-left: 1px solid #ccc; }
.side-strip { height: 6px; flex: none; background: #f3f3f3; }
.side-band { height: 35px; flex: none; background: #c8cac8; display: flex; align-items: flex-start; padding-left: 131px; }
.deploy { width: 95px; height: 30px; background: #516f8d; color: #c6ccd2; display: flex; align-items: center; padding: 0 0 2px 12px; gap: 4px; position: relative; }
.rocket { width: 16px; height: 18px; }
.caret { width: 0; height: 0; border-left: 4px solid transparent; border-right: 4px solid transparent; border-top: 5px solid #888; }
.c-light { border-top-color: #c6ccd2; position: absolute; right: 8px; top: 13px; }
.c-gray2 { border-top-color: #808080; }
.help { margin: 6px 0 0 22px; height: 16px; }
.help-q { font: 700 11px "Liberation Sans", sans-serif; fill: #8c8c8c; text-anchor: middle; }
.burger { margin: 8px 0 0 21px; width: 15px; display: flex; flex-direction: column; gap: 2px; }
.burger i { height: 3px; background: #8c8c8c; }
.side-tabs { height: 34px; flex: none; display: flex; border-bottom: 1px solid #ccc; padding: 4px 5px 0 3px; align-items: flex-start; gap: 6px; }
.side-tab { width: 133px; height: 31px; margin-top: -1px; background: #fff; border: 1px solid #ccc; border-bottom: 0; display: flex; align-items: center; padding: 0 0 3px 12px; gap: 5px; font-weight: 700; color: #444; }
.s-btn { width: 28px; height: 28px; background: #e8e8e8; border: 1px solid #ccc; display: flex; align-items: center; justify-content: center; }
.s-btn.on { background: #0cc000; border-color: #0cc000; }
.s-drop { width: 26px; height: 26px; margin-left: 1px; background: #e8e8e8; display: flex; align-items: center; justify-content: center; }
.side-filter { height: 42px; flex: none; border-bottom: 1px solid #d6d6d6; display: flex; padding: 9px 0 0 126px; gap: 10px; align-items: flex-start; }
.sf-btn { height: 25px; border: 1px solid #ccc; display: flex; align-items: center; padding: 0 0 1px 8px; gap: 2px; color: #8a8a8a; font-size: 13px; position: relative; }
.sf1 { width: 97px; }
.sf2 { width: 60px; }
.sf-btn .caret { position: absolute; right: 5px; top: 10px; }
.side-body { flex: 1; display: flex; justify-content: flex-end; }
.side-scroll { width: 18px; background: #f0f0f0; position: relative; }

/* taskbar */
.taskbar { height: 40px; flex: none; background: #414141; display: flex; overflow: hidden; color: #fff; }
.tb-app { width: 49px; flex: none; position: relative; display: flex; align-items: center; justify-content: center; padding-bottom: 2px; }
.tb-app.ul::after { content: ""; position: absolute; left: 4px; right: 4px; bottom: 0; height: 3px; background: #b8a060; }
.tb-app.active { background: #5e5e5e; }
.tb-app.active::after { left: 0; right: 0; }
.tb-ic { width: 26px; height: 26px; }
.ex-text { font: 700 12px "Liberation Sans", sans-serif; fill: #fff; text-anchor: middle; }
.ex-small { font: 700 8px "Liberation Sans", sans-serif; fill: #fff; text-anchor: middle; }
.tray-area { margin-left: auto; width: 494px; flex: none; display: flex; align-items: center; overflow: hidden; }
.tr-cloud { width: 26px; height: 20px; flex: none; margin-right: 7px; }
.tr-temp { width: 40px; flex: none; }
.tr-weather { width: 39px; flex: none; }
.tr-cell { width: 24px; flex: none; display: flex; justify-content: center; }
.tr-cell.first { margin-left: 0; }
.tr-cell.gap { margin-left: 24px; }
.tr-cell.sogou { margin-left: 4px; }
.tr-ime { font-size: 14px; }
.tr-ic { width: 16px; height: 16px; }
.clock { margin-left: 21px; flex: none; font-size: 13px; line-height: 18px; display: flex; flex-direction: column; white-space: nowrap; }
.clock span:first-child { padding-left: 2px; }

/* annotations */
.notes { position: absolute; left: 0; top: 0; width: 1748px; height: 1018px; pointer-events: none; }
.note { position: absolute; color: #fa2314; font-size: 21px; line-height: 24px; white-space: nowrap; }
.n1 { left: 468px; top: 302px; }
.n2 { left: 1303px; top: 200px; }
.n3 { left: 688px; top: 880px; }
```
